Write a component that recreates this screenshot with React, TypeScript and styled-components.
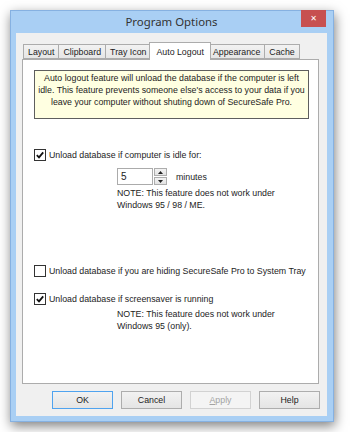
import styled, { createGlobalStyle } from "styled-components";

const GlobalStyle = createGlobalStyle`
  html, body {
    margin: 0;
    padding: 0;
    background: #ffffff;
  }
  body {
    font-family: "Liberation Sans", Arial, sans-serif;
  }
`;

const TABS = ["Layout", "Clipboard", "Tray Icon", "Auto Logout", "Appearance", "Cache"];
const ACTIVE_TAB = "Auto Logout";

const CheckIcon = () => (
  <svg width="10" height="10" viewBox="0 0 10 10">
    <path d="M1.8 5.2 L4 7.4 L8.2 2.4" fill="none" stroke="#111" strokeWidth="1.8" />
  </svg>
);

const Arrow = ({ up }: { up?: boolean }) => (
  <svg width="5" height="3" viewBox="0 0 5 3">
    <path d={up ? "M0 3 L2.5 0 L5 3 Z" : "M0 0 L2.5 3 L5 0 Z"} fill="#222" />
  </svg>
);

interface CheckProps {
  checked?: boolean;
  children: React.ReactNode;
}

const Check = ({ checked, children }: CheckProps) => (
  <CheckRow>
    <Box>{checked && <CheckIcon />}</Box>
    <span>{children}</span>
  </CheckRow>
);

const App = () => {
  return (
    <>
      <GlobalStyle />
      <Page>
        <Window>
          <TitleBar>
            <span />
            <Title>Program Options</Title>
            <CloseButton>✕</CloseButton>
          </TitleBar>
          <Client>
            <TabStrip>
              {TABS.map((t) => (
                <Tab key={t} $active={t === ACTIVE_TAB}>
                  {t}
                </Tab>
              ))}
            </TabStrip>
            <Panel>
              <InfoBox>
                Auto logout feature will unload the database if the computer is left
                <br />
                idle. This feature prevents someone else's access to your data if you
                <br />
                leave your computer without shuting down of SecureSafe Pro.
              </InfoBox>

              <Section $top={30}>
                <Check checked>Unload database if computer is idle for:</Check>
              </Section>

              <SpinRow>
                <SpinInput>5</SpinInput>
                <SpinButtons>
                  <SpinButton>
                    <Arrow up />
                  </SpinButton>
                  <SpinButton>
                    <Arrow />
                  </SpinButton>
                </SpinButtons>
                <Unit>minutes</Unit>
              </SpinRow>

              <Note $top={2}>
                NOTE: This feature does not work under
                <br />
                Windows 95 / 98 / ME.
              </Note>

              <Section $top={54}>
                <Check>Unload database if you are hiding SecureSafe Pro to System Tray</Check>
              </Section>

              <Section $top={16}>
                <Check checked>Unload database if screensaver is running</Check>
              </Section>

              <Note $top={3}>
                NOTE: This feature does not work under
                <br />
                Windows 95 (only).
              </Note>
            </Panel>

            <ButtonRow>
              <Button $default>OK</Button>
              <Button>Cancel</Button>
              <Button $disabled>
                <u>A</u>pply
              </Button>
              <Button>Help</Button>
            </ButtonRow>
          </Client>
        </Window>
      </Page>
    </>
  );
};

export default App;

const Page = styled.div`
  padding: 10px;
`;

const Window = styled.div`
  width: 324px;
  height: 412px;
  box-sizing: border-box;
  display: flex;
  flex-direction: column;
  padding: 0 6px 5px 5px;

  background: #a9cff4;
  border: 1px solid #86b1e1;
  box-shadow: 1px 4px 11px rgba(0, 0, 0, 0.5);
`;

const TitleBar = styled.div`
  height: 22px;
  display: grid;
  grid-template-columns: 26px 1fr 26px;
  align-items: start;
`;

const Title = styled.div`
  font-family: "Noto Sans", "Open Sans", sans-serif;
  font-size: 11.4px;
  line-height: 22px;
  color: #333333;
  text-align: center;
`;

const CloseButton = styled.div`
  width: 25px;
  height: 17px;
  margin-top: -1px;
  display: flex;
  align-items: center;
  justify-content: center;

  background: #c75050;
  color: #ffffff;
  font-family: "DejaVu Sans", sans-serif;
  font-size: 8px;
  font-weight: bold;
`;

const Client = styled.div`
  flex: 1;
  display: flex;
  flex-direction: column;
  padding: 9px 7px 7px 6px;

  background: #f0f0f0;
  font-size: 8.8px;
  color: #1c1c1c;
`;

const TabStrip = styled.div`
  height: 17px;
  display: flex;
  align-items: flex-end;
  padding-left: 1px;
`;

const Tab = styled.div<{ $active?: boolean }>`
  height: ${({ $active }) => ($active ? "18px" : "15px")};
  margin: ${({ $active }) => ($active ? "0 -2px -1px -2px" : "0")};
  padding: ${({ $active }) => ($active ? "0 6px" : "0 4px")};
  box-sizing: border-box;
  display: flex;
  align-items: center;
  position: relative;
  z-index: ${({ $active }) => ($active ? 1 : 0)};

  border: 1px solid #acacac;
  border-bottom: ${({ $active }) => ($active ? "none" : "1px solid #acacac")};
  border-left-width: ${({ $active }) => ($active ? "1px" : "0")};
  background: ${({ $active }) =>
    $active ? "#ffffff" : "linear-gradient(#f2f2f2, #e6e6e6)"};
  white-space: nowrap;

  &:first-child {
    border-left-width: 1px;
  }
`;

const Panel = styled.div`
  width: 297px;
  height: 325px;
  box-sizing: border-box;
  display: flex;
  flex-direction: column;
  align-items: flex-start;
  padding: 10px 10px 0 11px;

  background: #ffffff;
  border: 1px solid #acacac;
`;

const InfoBox = styled.div`
  width: 275px;
  height: 49px;
  box-sizing: border-box;
  padding: 1px 0 0;

  background: #ffffe1;
  border: 1px solid #5e5e5e;
  line-height: 12px;
  text-align: center;
  white-space: nowrap;
`;

const Section = styled.div<{ $top: number }>`
  margin-top: ${({ $top }) => $top}px;
`;

const CheckRow = styled.label`
  display: flex;
  align-items: center;
  gap: 3px;
  height: 12px;
  line-height: 12px;
  white-space: nowrap;
`;

const Box = styled.span`
  width: 12px;
  height: 12px;
  box-sizing: border-box;
  display: flex;
  align-items: center;
  justify-content: center;

  border: 1px solid #333333;
  background: #ffffff;
`;

const SpinRow = styled.div`
  margin: 7px 0 0 83px;
  display: flex;
  align-items: center;
`;

const SpinInput = styled.div`
  width: 36px;
  height: 17px;
  box-sizing: border-box;
  padding: 1px 0 0 3px;
  line-height: 14px;
  font-size: 10px;

  border: 1px solid #ababab;
  background: #ffffff;
`;

const SpinButtons = styled.div`
  display: flex;
  flex-direction: column;
  gap: 1px;
  margin-left: 1px;
`;

const SpinButton = styled.div`
  width: 13px;
  height: 8px;
  box-sizing: border-box;
  display: flex;
  align-items: center;
  justify-content: center;

  border: 1px solid #adadad;
  background: linear-gradient(#f3f3f3, #e3e3e3);
`;

const Unit = styled.span`
  margin-left: 9px;
`;

const Note = styled.div<{ $top: number }>`
  margin: ${({ $top }) => $top}px 0 0 83px;
  line-height: 12px;
`;

const ButtonRow = styled.div`
  margin-top: 7px;
  display: flex;
  justify-content: flex-end;
  gap: 8px;
`;

const Button = styled.div<{ $default?: boolean; $disabled?: boolean }>`
  width: 61px;
  height: 18px;
  box-sizing: border-box;
  display: flex;
  align-items: center;
  justify-content: center;

  border: 1px solid
    ${({ $default, $disabled }) =>
      $default ? "#4fa3ef" : $disabled ? "#d2d2d2" : "#adadad"};
  background: ${({ $disabled }) =>
    $disabled ? "#f4f4f4" : "linear-gradient(#f2f2f2, #e4e4e4)"};
  color: ${({ $disabled }) => ($disabled ? "#a3a3a3" : "#1c1c1c")};
`;
